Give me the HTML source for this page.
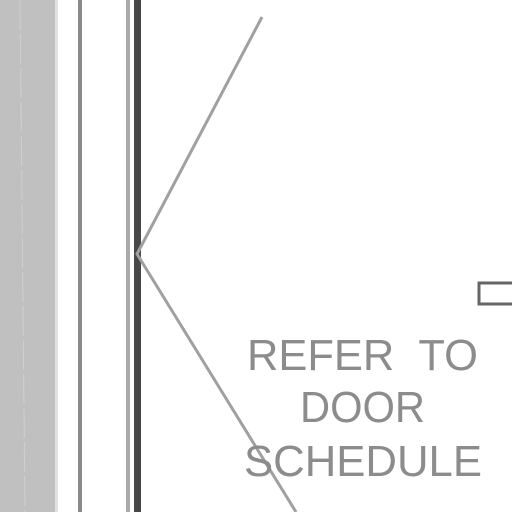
<!DOCTYPE html>
<html><head><style>html,body{margin:0;padding:0;background:#fff;width:512px;height:512px;overflow:hidden}</style></head>
<body>
<svg width="512" height="512" viewBox="0 0 512 512" xmlns="http://www.w3.org/2000/svg">
<rect x="0" y="0" width="512" height="512" fill="#fff"/>
<rect x="0" y="0" width="55" height="512" fill="#c0c0c0"/>
<rect x="55" y="0" width="3" height="512" fill="#e2e2e2"/>
<line x1="20" y1="0" x2="25" y2="512" stroke="#d0d0d0" stroke-width="1" stroke-dasharray="30,4"/>
<rect x="78" y="0" width="4" height="512" fill="#8a8a8a"/>
<rect x="126" y="0" width="4" height="512" fill="#aaaaaa"/>
<rect x="134" y="0" width="7" height="512" fill="#484848"/>
<polyline points="262,17 137,254 296,512" fill="none" stroke="#a0a0a0" stroke-width="3"/>
<rect x="479" y="283" width="40" height="21" fill="none" stroke="#666" stroke-width="3"/>
<g font-family="Liberation Sans, sans-serif" font-size="44" fill="#8c8c8c">
<text x="247" y="370" textLength="231" lengthAdjust="spacingAndGlyphs">REFER&#160;&#160;TO</text>
<text x="300" y="422" textLength="125" lengthAdjust="spacingAndGlyphs">DOOR</text>
<text x="244" y="476" textLength="238" lengthAdjust="spacingAndGlyphs">SCHEDULE</text>
</g>
</svg>
</body></html>
